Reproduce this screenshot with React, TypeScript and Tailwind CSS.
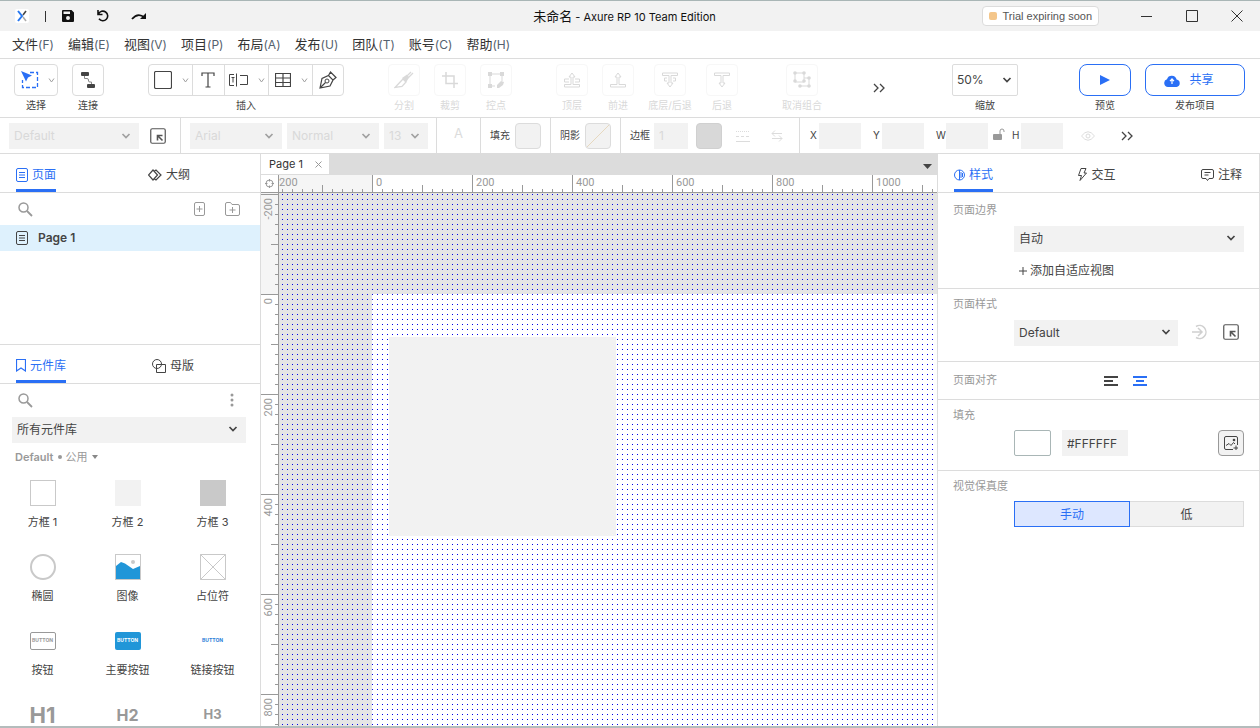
import { useLayoutEffect, useRef, useState } from "react";
import type { ReactNode } from "react";
import clsx from "clsx";

const MENUS = [
  ["文件", "F"], ["编辑", "E"], ["视图", "V"], ["项目", "P"], ["布局", "A"],
  ["发布", "U"], ["团队", "T"], ["账号", "C"], ["帮助", "H"],
];

function Svg({ w = 16, h = 16, children, className }: { w?: number; h?: number; children: ReactNode; className?: string }) {
  return (
    <svg width={w} height={h} viewBox={`0 0 ${w} ${h}`} fill="none" stroke="currentColor" className={clsx("shrink-0", className)}>
      {children}
    </svg>
  );
}

function Chevron({ className }: { className?: string }) {
  return (
    <Svg w={10} h={6} className={className}>
      <path d="M1.5 1L5 4.5L8.5 1" strokeWidth="1.7" />
    </Svg>
  );
}

function SmallChevron() {
  return (
    <Svg w={7} h={5} className="text-[#a0a0a0]">
      <path d="M1 .5L3.5 4L6 .5" />
    </Svg>
  );
}

function DoubleChevron() {
  return (
    <Svg w={12} h={10} className="text-[#444]">
      <path d="M1 1L5 5L1 9M7 1L11 5L7 9" strokeWidth="1.3" />
    </Svg>
  );
}

function Select({ label, value, className, selectClass, chevronClass = "right-2", disabled }: { label: string; value: string; className?: string; selectClass?: string; chevronClass?: string; disabled?: boolean }) {
  return (
    <div className={clsx("relative shrink-0", className)}>
      <select
        aria-label={label}
        disabled={disabled}
        className={clsx("h-full w-full appearance-none px-[5px] text-xs opacity-100 outline-none", disabled ? "bg-[#f2f2f2] text-[#d9d9d9]" : "text-[#444]", selectClass)}
      >
        <option>{value}</option>
      </select>
      <Chevron className={clsx("pointer-events-none absolute top-1/2 -mt-[3px]", chevronClass, disabled ? "text-[#a0a0a0]" : "text-[#444]")} />
    </div>
  );
}

function Divider() {
  return <div className="w-px shrink-0 self-stretch bg-[#dcdcdc]" />;
}

function Tool({ label, children, className }: { label: string; children: ReactNode; className?: string }) {
  return (
    <div className={clsx("flex shrink-0 flex-col items-center gap-[3px] text-[10px] leading-3 whitespace-nowrap text-[#444]", className)}>
      {children}
      <span>{label}</span>
    </div>
  );
}

function DisabledTool({ label, children, className = "w-8" }: { label: string; children: ReactNode; className?: string }) {
  return (
    <Tool label={label} className={clsx("text-[#d9d9d9]!", className)}>
      <button disabled aria-label={label} className="flex size-8 items-center justify-center rounded-sm border border-[#f7f7f7]">
        {children}
      </button>
    </Tool>
  );
}

function CornerArrow() {
  return (
    <Svg w={16} h={16} className="text-[#555]">
      <rect x=".75" y=".75" width="14.5" height="14.5" rx="1.5" strokeWidth="1.2" />
      <path d="M7.5 12.5V7.5H12.5M7.5 7.5L12.5 12.5" strokeWidth="1.6" />
    </Svg>
  );
}

function PageIcon() {
  return (
    <Svg w={12} h={14}>
      <rect x=".5" y=".5" width="11" height="13" rx="1.5" />
      <path d="M3 4.5H9M3 7H9M3 9.5H9" />
    </Svg>
  );
}

function SearchIcon() {
  return (
    <Svg w={15} h={15} className="text-[#999]">
      <circle cx="5.5" cy="5.5" r="4.5" strokeWidth="1.5" />
      <path d="M9 9L14 14" strokeWidth="1.8" />
    </Svg>
  );
}

function TitleBar() {
  return (
    <header className="grid h-[31px] shrink-0 grid-cols-[1fr_auto_1fr] items-center border-t border-[#a9b6b6] bg-[#f2f2f2]">
      <div className="flex items-center pl-[15px]">
        <svg width="14" height="14" viewBox="0 0 14 14" fill="none">
          <rect width="14" height="14" rx="2" fill="#fff" />
          <path d="M3 2L7 7L3 12" stroke="#2878f0" strokeWidth="2" />
          <path d="M11 2L8 6" stroke="#444" strokeWidth="1.6" />
          <path d="M8 8L11 12" stroke="#aaa" strokeWidth="1.6" />
        </svg>
        <div className="ml-4 h-[11px] w-px bg-[#333]" />
        <button aria-label="保存" className="ml-4">
          <svg width="12" height="12" viewBox="0 0 12 12" fill="#111">
            <path fillRule="evenodd" d="M1 0H9.5L12 2.5V11Q12 12 11 12H1Q0 12 0 11V1Q0 0 1 0ZM1.5 1.5V4H8V1.5ZM6 6A2 2 0 1 0 6 10A2 2 0 1 0 6 6Z" />
          </svg>
        </button>
        <button aria-label="撤销" className="ml-[23px]">
          <Svg w={12} h={12} className="text-[#111]">
            <path d="M1 0V4.5H5.5M1.5 4A4.8 4.8 0 1 1 2 8.8" strokeWidth="1.6" />
          </Svg>
        </button>
        <button aria-label="重做" className="ml-[22px]">
          <Svg w={16} h={12} className="text-[#111]">
            <path d="M1 9Q7 2 13.5 7.5" strokeWidth="1.8" />
            <path d="M15 3V9H9Z" fill="currentColor" stroke="none" />
          </Svg>
        </button>
      </div>
      <h1 className="pr-[11px] text-[11px] leading-4 text-[#111]"><span className="text-[13px]">未命名</span> - Axure RP 10 Team Edition</h1>
      <div className="flex items-center justify-end pr-[17px] text-[#333]">
        <button className="flex h-5 items-center gap-[6px] rounded-sm border border-[#dcdcdc] bg-white px-[6px] font-['Liberation_Sans',sans-serif] text-[11px] text-[#555]">
          <span className="size-2 rounded-xs bg-[#f4c68a]" />
          Trial expiring soon
        </button>
        <button aria-label="最小化" className="ml-[42px]"><Svg w={12} h={12}><path d="M0 6.5H11" /></Svg></button>
        <button aria-label="最大化" className="ml-[33px]"><Svg w={12} h={12}><path d="M.5 .5H11.5V11.5H.5Z" /></Svg></button>
        <button aria-label="关闭" className="ml-[33px]"><Svg w={12} h={12}><path d="M.5 .5L11.5 11.5M11.5 .5L.5 11.5" /></Svg></button>
      </div>
    </header>
  );
}

function ToolBar() {
  const cell = "flex h-full items-center justify-center border-r border-[#dcdcdc] last:border-r-0";
  return (
    <div className="flex h-[59px] shrink-0 items-start border-b border-[#dcdcdc] px-[14px] pt-[5px]">
      <Tool label="选择" className="w-11">
        <button aria-label="选择" className="flex h-8 w-11 items-center justify-center gap-[9px] rounded-sm border border-[#dcdcdc] pl-1">
          <Svg w={18} h={18} className="text-[#2a6ff5]">
            <path d="M9 1.5H16.5V16.5H1.5V9" strokeDasharray="4 2" strokeWidth="1.3" />
            <path d="M0 0L11 4.5L7 6.5L5 10.5Z" fill="currentColor" stroke="none" />
          </Svg>
          <SmallChevron />
        </button>
      </Tool>
      <Tool label="连接" className="ml-[14px] w-8">
        <button aria-label="连接" className="flex size-8 items-center justify-center rounded-sm border border-[#dcdcdc] text-[#444]">
          <Svg w={16} h={18}>
            <path d="M4.5 4V7.5H7Q8.5 7.5 8.5 9V10Q8.5 11 10 11H11.5V14" stroke="#888" />
            <rect x="1" y="1" width="8" height="4" rx="1" fill="currentColor" stroke="none" />
            <rect x="7" y="13" width="8" height="4" rx="1" fill="currentColor" stroke="none" />
          </Svg>
        </button>
      </Tool>
      <Tool label="插入" className="ml-11">
        <div className="flex h-8 rounded-sm border border-[#dcdcdc] text-[#444]">
          <button aria-label="矩形" className={clsx(cell, "w-11 gap-[10px] pl-[2px]")}>
            <Svg w={18} h={18}><rect x=".5" y=".5" width="17" height="17" rx="1.5" strokeWidth="1.2" /></Svg>
            <SmallChevron />
          </button>
          <button aria-label="文本" className={clsx(cell, "w-8 pr-[2px]")}>
            <Svg w={14} h={16}><path d="M1 4V1H13V4M7 1V15M4.5 15H9.5" strokeWidth="1.2" /></Svg>
          </button>
          <button aria-label="表单" className={clsx(cell, "w-11 gap-[9px]")}>
            <Svg w={20} h={14}>
              <path d="M5 1.5H.5V12.5H5M7.5 .5V13.5M11 2.5H18.5V11.5H11M2.5 4.5H5.5M4 4.5V9.5" />
            </Svg>
            <SmallChevron />
          </button>
          <button aria-label="表格" className={clsx(cell, "w-11 gap-[10px] pl-[2px]")}>
            <Svg w={16} h={14}><path d="M.5 .5H15.5V13.5H.5ZM.5 5H15.5M.5 9.5H15.5M8 .5V13.5" strokeWidth="1.2" /></Svg>
            <SmallChevron />
          </button>
          <button aria-label="钢笔" className={clsx(cell, "w-[30px]")}>
            <Svg w={18} h={18}>
              <path d="M1 17L3 7.5L9.5 4.5L14 9L11 15L1 17ZM9.5 4.5L11.5 1L17 6.5L14 9M1 17L6.5 11.5" strokeWidth="1.2" />
              <circle cx="8" cy="10" r="2" />
            </Svg>
          </button>
        </div>
      </Tool>
      <div className="ml-11 flex gap-[14px]">
        <DisabledTool label="分割">
          <Svg w={20} h={18}>
            <path d="M1 16.5L9 8L12 11L8 15.5Z M12 9L19 2M11 7L17 1" strokeWidth="1.3" />
            <path d="M8 7L13 3.5L15 6L12.5 11Z" fill="currentColor" stroke="none" />
          </Svg>
        </DisabledTool>
        <DisabledTool label="裁剪">
          <Svg w={16} h={16}><path d="M4 0V11.5H16M0 4H12V16" strokeWidth="1.5" /></Svg>
        </DisabledTool>
        <DisabledTool label="控点">
          <Svg w={18} h={18}>
            <path d="M3 3H15M3 3V15M15 3V10M3 15H8" />
            <path d="M1 1H5V5H1ZM13 1H17V5H13ZM1 13H5V17H1ZM10 14L14 10L17 11L16 14L12 17H10Z" fill="currentColor" stroke="none" />
          </Svg>
        </DisabledTool>
      </div>
      <div className="ml-11 flex gap-[14px]">
        <DisabledTool label="顶层">
          <Svg w={18} h={18}><path d="M8 13.5V6H6L9 2L12 6H10V13.5H16.5V16H1.5V13.5ZM6 8H1.5V11H6M12 8H16.5V11H12" /></Svg>
        </DisabledTool>
        <DisabledTool label="前进">
          <Svg w={18} h={18}><path d="M8 13.5V6H6L9 2L12 6H10V13.5H16.5V16H1.5V13.5Z" /></Svg>
        </DisabledTool>
        <DisabledTool label="底层/后退" className="w-11">
          <Svg w={18} h={18}><path d="M8 4.5V12H6L9 16L12 12H10V4.5H16.5V2H1.5V4.5ZM6 10H3.5V7H6M12 10H14.5V7H12" /></Svg>
        </DisabledTool>
        <DisabledTool label="后退">
          <Svg w={18} h={18}><path d="M8 4.5V12H6L9 16L12 12H10V4.5H16.5V2H1.5V4.5Z" /></Svg>
        </DisabledTool>
      </div>
      <DisabledTool label="取消组合" className="ml-11 w-10">
        <Svg w={18} h={18}>
          <path d="M2 2H11V11H2ZM7 15H16V7H11" />
          <g fill="currentColor" stroke="none">
            <circle cx="2" cy="2" r="1.8" /><circle cx="11" cy="2" r="1.8" /><circle cx="2" cy="10" r="1.8" /><circle cx="11" cy="10" r="1.8" />
            <circle cx="16" cy="7" r="1.8" /><circle cx="7" cy="15" r="1.8" /><circle cx="16" cy="15" r="1.8" />
          </g>
        </Svg>
      </DisabledTool>
      <button aria-label="更多工具" className="mt-[19px] ml-[51px]"><DoubleChevron /></button>
      <Tool label="缩放" className="mr-[61px] ml-auto">
        <Select label="缩放" value="50%" className="h-8 w-[66px]" selectClass="rounded-xs border border-[#dcdcdc] text-[#444] pl-1!" chevronClass="right-[6px]" />
      </Tool>
      <Tool label="预览" className="mr-[14px]">
        <button aria-label="预览" className="flex h-8 w-[52px] items-center justify-center rounded-lg border border-[#2a6ff5]">
          <svg width="10" height="10" viewBox="0 0 10 10" fill="#2a6ff5"><path d="M0 0L10 5L0 10Z" /></svg>
        </button>
      </Tool>
      <Tool label="发布项目" className="mr-px">
        <button className="flex h-8 w-[100px] items-center justify-center gap-[9px] rounded-lg border border-[#2a6ff5] pr-3 text-xs text-[#2a6ff5]">
          <svg width="16" height="13" viewBox="0 0 16 13">
            <path d="M4 13A4 4 0 0 1 3 5.2A5 5 0 0 1 12.6 5.5A3.8 3.8 0 0 1 12.5 13Z" fill="#2a6ff5" />
            <path d="M8 10V5.5M6 7.2L8 5L10 7.2" fill="none" stroke="#fff" strokeWidth="1.2" />
          </svg>
          共享
        </button>
      </Tool>
    </div>
  );
}

function Coord({ name, className }: { name: string; className?: string }) {
  return (
    <label className={clsx("flex w-[51px] shrink-0 items-center justify-between text-[10px] text-[#444]", className)}>
      {name}
      <input disabled className="h-[26px] w-[42px] bg-[#f2f2f2]" />
    </label>
  );
}

function FormatBar() {
  const swatch = "size-[26px] shrink-0 rounded-sm border border-[#dcdcdc] bg-[#f2f2f2]";
  return (
    <div className="flex h-9 shrink-0 items-center border-b border-[#dcdcdc] pl-[9px] text-[10px] text-[#444]">
      <Select disabled label="部件样式" value="Default" className="h-[26px] w-[130px]" />
      <button aria-label="样式管理" className="mr-[14px] ml-[11px]"><CornerArrow /></button>
      <Divider />
      <div className="mr-2 ml-[9px] flex gap-[5px]">
        <Select disabled label="字体" value="Arial" className="h-[26px] w-[92px]" />
        <Select disabled label="字重" value="Normal" className="h-[26px] w-[92px]" />
        <Select disabled label="字号" value="13" className="h-[26px] w-11" />
      </div>
      <Divider />
      <button disabled aria-label="文字颜色" className="w-[43px] shrink-0 pb-1 text-center text-[13px] text-[#dcdcdc]">A</button>
      <Divider />
      <div className="flex shrink-0 items-center gap-[5px] px-[9px]">填充<button disabled aria-label="填充" className={swatch} /></div>
      <Divider />
      <div className="flex shrink-0 items-center gap-[5px] px-[9px]">
        阴影
        <button disabled aria-label="阴影" className={swatch}>
          <Svg w={24} h={24} className="text-[#e6d8bf]"><path d="M1 23L23 1" /></Svg>
        </button>
      </div>
      <Divider />
      <label className="flex shrink-0 items-center gap-1 pl-[9px]">
        边框
        <input disabled defaultValue="1" className="h-[26px] w-[34px] bg-[#f2f2f2] px-[5px] text-xs text-[#d9d9d9]" />
      </label>
      <button disabled aria-label="边框颜色" className="ml-2 size-[26px] shrink-0 rounded-sm border border-[#d0d0d0] bg-[#d8d8d8]" />
      <button disabled aria-label="线型" className="ml-[14px] text-[#dcdcdc]">
        <Svg w={14} h={12}><path d="M0 1.5H14" strokeDasharray="1 1" /><path d="M0 6.5H14" strokeDasharray="3 2" /><path d="M0 11.5H14" /></Svg>
      </button>
      <button disabled aria-label="箭头" className="mr-[15px] ml-5 text-[#dcdcdc]">
        <Svg w={14} h={12}><path d="M12 3.5H2M5 .5L2 3.5L5 6.5M2 8.5H12M9 5.5L12 8.5L9 11.5" /></Svg>
      </button>
      <Divider />
      <Coord name="X" className="ml-[10px]" />
      <Coord name="Y" className="ml-3" />
      <Coord name="W" className="ml-3" />
      <button aria-label="锁定比例" className="ml-[6px] pb-1">
        <Svg w={12} h={14} className="text-[#999]">
          <rect x="0" y="7" width="9" height="6" rx="1" fill="currentColor" stroke="none" />
          <path d="M7 7V4A2 2 0 0 1 11 4V5" />
        </Svg>
      </button>
      <Coord name="H" className="ml-[7px]" />
      <button disabled aria-label="可见性" className="ml-[18px] text-[#dcdcdc]">
        <Svg w={14} h={10}><path d="M.5 5Q7 -3.5 13.5 5Q7 13.5 .5 5Z" /><circle cx="7" cy="5" r="2" /></Svg>
      </button>
      <button aria-label="更多属性" className="ml-[26px]"><DoubleChevron /></button>
    </div>
  );
}

function Tab({ label, icon, active }: { label: string; icon: ReactNode; active?: boolean }) {
  return (
    <button className={clsx("flex h-full items-center gap-1 border-b-3 pt-[6px] text-xs", active ? "border-[#2a6ff5] text-[#2a6ff5]" : "border-transparent text-[#444]")}>
      {icon}
      {label}
    </button>
  );
}

const WIDGETS: { label: string; art: ReactNode }[] = [
  { label: "方框 1", art: <div className="size-[26px] border border-[#c9c9c9]" /> },
  { label: "方框 2", art: <div className="size-[26px] bg-[#f2f2f2]" /> },
  { label: "方框 3", art: <div className="size-[26px] bg-[#c9c9c9]" /> },
  { label: "椭圆", art: <div className="size-[26px] rounded-full border-2 border-[#c9c9c9]" /> },
  {
    label: "图像",
    art: (
      <Svg w={26} h={26}>
        <rect x=".5" y=".5" width="25" height="25" stroke="#c9c9c9" />
        <path d="M1 12L6 8L10 9.5L18 15L25 12V25H1Z" fill="#2196d8" stroke="none" />
        <circle cx="18" cy="8" r="2" fill="#c9c9c9" stroke="none" />
      </Svg>
    ),
  },
  { label: "占位符", art: <Svg w={26} h={26} className="text-[#c9c9c9]"><path d="M.5 .5H25.5V25.5H.5ZM.5 .5L25.5 25.5M25.5 .5L.5 25.5" /></Svg> },
  { label: "按钮", art: <div className="flex h-[18px] w-[26px] items-center justify-center rounded-xs border border-[#999] text-[5px] font-bold text-[#999]">BUTTON</div> },
  { label: "主要按钮", art: <div className="flex h-[18px] w-[26px] items-center justify-center rounded-xs bg-[#2196d8] text-[5px] font-bold text-white">BUTTON</div> },
  { label: "链接按钮", art: <div className="text-[5px] font-bold text-[#2a80d8]">BUTTON</div> },
  { label: "", art: <div className="text-[22px] font-bold text-[#999]">H1</div> },
  { label: "", art: <div className="text-base font-bold text-[#999]">H2</div> },
  { label: "", art: <div className="text-[13px] font-bold text-[#999]">H3</div> },
];

function LeftPanel() {
  return (
    <aside className="flex w-[261px] shrink-0 flex-col overflow-hidden border-r border-[#dcdcdc]">
      <div className="flex h-[39px] shrink-0 justify-between border-b border-[#dcdcdc] pr-[70px] pl-4">
        <Tab active label="页面" icon={<PageIcon />} />
        <Tab label="大纲" icon={<Svg w={14} h={12}><path d="M5 1L9.5 6L5 11L.5 6ZM6.5 2L8 1L13 6L8 11L6.5 10" strokeWidth="1.2" /></Svg>} />
      </div>
      <div className="flex h-8 shrink-0 items-center pr-5 pl-[18px] text-[#999]">
        <button aria-label="搜索页面"><SearchIcon /></button>
        <button aria-label="添加页面" className="ml-auto">
          <Svg w={11} h={14}><rect x=".5" y=".5" width="10" height="13" rx="1.5" /><path d="M5.5 4V10M2.5 7H8.5" /></Svg>
        </button>
        <button aria-label="添加文件夹" className="ml-5">
          <Svg w={15} h={14}><path d="M.5 12V2Q.5 .5 2 .5H5.5L7 2.5H13Q14.5 2.5 14.5 4V12Q14.5 13.5 13 13.5H2Q.5 13.5 .5 12ZM7.5 5V11M4.5 8H10.5" /></Svg>
        </button>
      </div>
      <button className="flex h-[26px] shrink-0 items-center gap-[10px] bg-[#def1fd] pl-4 text-xs font-semibold text-[#444]">
        <PageIcon />
        Page 1
      </button>
      <div className="h-[93px] shrink-0" />
      <div className="flex h-10 shrink-0 justify-between border-y border-[#dcdcdc] pr-[66px] pl-4">
        <Tab active label="元件库" icon={<Svg w={10} h={13}><path d="M.5 .5H9.5V12L5 9L.5 12Z" strokeWidth="1.2" /></Svg>} />
        <Tab label="母版" icon={<Svg w={14} h={14}><circle cx="5" cy="5" r="4.5" /><path d="M4.5 5.5H13.5V13.5H4.5Z" /></Svg>} />
      </div>
      <div className="flex h-8 shrink-0 items-center justify-between pr-[26px] pl-[18px] text-[#999]">
        <button aria-label="搜索元件"><SearchIcon /></button>
        <button aria-label="元件库选项">
          <svg width="4" height="14" viewBox="0 0 4 14" fill="#999"><circle cx="2" cy="2" r="1.5" /><circle cx="2" cy="7" r="1.5" /><circle cx="2" cy="12" r="1.5" /></svg>
        </button>
      </div>
      <Select label="元件库" value="所有元件库" className="mr-[14px] ml-3 h-[26px]" selectClass="bg-[#f2f2f2]" />
      <button className="flex h-[30px] shrink-0 items-center gap-1 pl-[15px] text-[11px] text-[#999]">
        <b className="font-semibold">Default</b><span className="size-1 rounded-full bg-[#999]" />公用
        <svg width="6" height="4" viewBox="0 0 6 4" fill="#888"><path d="M0 0H6L3 4Z" /></svg>
      </button>
      <ul className="grid min-h-0 grow auto-rows-[74px] grid-cols-3 overflow-hidden pt-2 pr-[5px] text-[11px] text-[#444]">
        {WIDGETS.map((w, i) => (
          <li key={i} className="flex flex-col items-center gap-2">
            <div className="flex h-[26px] items-center justify-center">{w.art}</div>
            <span className="leading-4">{w.label}</span>
          </li>
        ))}
      </ul>
    </aside>
  );
}

// canvas is at 50%: 1 screen px = 2 page units
const ORIGIN_X = 93;
const ORIGIN_Y = 101;

function Ruler({ vertical }: { vertical?: boolean }) {
  const ref = useRef<SVGSVGElement>(null);
  const [size, setSize] = useState(0);

  useLayoutEffect(() => {
    const measure = () => {
      const box = ref.current!.getBoundingClientRect();
      setSize(vertical ? box.height : box.width);
    };
    measure();
    window.addEventListener("resize", measure);
    return () => window.removeEventListener("resize", measure);
  }, [vertical]);

  const origin = vertical ? ORIGIN_Y : ORIGIN_X;
  const ticks: number[] = [];
  for (let n = -10; origin + n * 10 < size; n++) ticks.push(n);

  return (
    <svg
      ref={ref}
      aria-hidden="true"
      className={clsx("block bg-white font-[Roboto,sans-serif] text-[11px]", vertical ? "h-full w-[18px]" : "h-[18px] w-full")}
      shapeRendering="crispEdges"
    >
      <rect width={vertical ? 18 : origin} height={vertical ? origin : 18} fill="#f5f5f5" />
      {ticks.map((n) => {
        const p = origin + n * 10;
        const len = n % 10 === 0 ? 18 : n % 5 === 0 ? 7 : 3;
        return vertical ? (
          <rect key={n} x={17 - len} y={p} width={len} height="1" fill="#999" />
        ) : (
          <rect key={n} x={p} y={17 - len} width="1" height={len} fill="#999" />
        );
      })}
      {ticks.filter((n) => n % 10 === 0 && origin + n * 10 < size - 20).map((n) => {
        const p = origin + n * 10;
        return (
          <text key={n} fill="#999" transform={vertical ? `translate(11 ${p + 4}) rotate(-90)` : `translate(${p + 4} 11)`} textAnchor={vertical ? "end" : "start"}>
            {n * 20}
          </text>
        );
      })}
      <rect x={vertical ? 17 : 0} y={vertical ? 0 : 17} width={vertical ? 1 : "100%"} height={vertical ? "100%" : 1} fill="#999" />
    </svg>
  );
}

function Canvas() {
  return (
    <main className="flex min-w-0 grow flex-col overflow-hidden">
      <div className="flex h-[21px] shrink-0 items-center justify-between bg-[#dcdcdc] pr-[5px]">
        <div className="flex h-5 items-center gap-3 self-start bg-white pr-[7px] pl-2 text-[11px] text-[#333]">
          Page 1
          <button aria-label="关闭页面" className="text-[#999]"><Svg w={7} h={7}><path d="M.5 .5L6.5 6.5M6.5 .5L.5 6.5" /></Svg></button>
        </div>
        <button aria-label="页面列表" className="pt-1"><svg width="9" height="5" viewBox="0 0 9 5" fill="#444"><path d="M0 0H9L4.5 5Z" /></svg></button>
      </div>
      <div className="grid min-h-0 grow grid-cols-[18px_minmax(0,1fr)] grid-rows-[18px_minmax(0,1fr)]">
        <div className="flex items-center justify-center border-r border-b border-[#999] bg-white text-[#999]">
          <Svg w={9} h={9}><circle cx="4.5" cy="4.5" r="3.5" /><path d="M4.5 0V2.5M4.5 6.5V9M0 4.5H2.5M6.5 4.5H9" /></Svg>
        </div>
        <Ruler />
        <Ruler vertical />
        <svg className="block h-full w-full bg-[#e5e5e5]" shapeRendering="crispEdges">
          <defs>
            <pattern id="dots" x={ORIGIN_X} y={ORIGIN_Y} width="5" height="5" patternUnits="userSpaceOnUse">
              <rect width="1" height="1" fill="#0000e6" />
            </pattern>
          </defs>
          <rect x={ORIGIN_X} y={ORIGIN_Y} width="100%" height="100%" fill="#fff" />
          <rect width="100%" height="100%" fill="url(#dots)" />
          <rect x={ORIGIN_X + 17} y={ORIGIN_Y + 43} width="227" height="199" fill="#f2f2f2" />
        </svg>
      </div>
    </main>
  );
}

function Section({ title, children, className }: { title: string; children: ReactNode; className?: string }) {
  return (
    <section className={clsx("border-b border-[#dcdcdc] pr-[15px] pl-[15px] last:border-b-0", className)}>
      <h2 className="text-[11px] leading-4 text-[#999]">{title}</h2>
      {children}
    </section>
  );
}

function RightPanel() {
  return (
    <aside className="w-[323px] shrink-0 overflow-hidden border-x border-[#dcdcdc]">
      <div className="flex h-[39px] justify-between border-b border-[#dcdcdc] pr-[17px] pl-4">
        <Tab active label="样式" icon={<Svg w={11} h={12}><circle cx="5.5" cy="6" r="5" /><path d="M5.5 1V11M7 3V9M8.5 4V8" /></Svg>} />
        <Tab label="交互" icon={<Svg w={9} h={13}><path d="M3 .5H8L6 5H8.5L2 12.5L3.5 7.5H.5Z" /></Svg>} />
        <Tab label="注释" icon={<Svg w={13} h={12}><path d="M2 .5H11Q12.5 .5 12.5 2V8Q12.5 9.5 11 9.5H8L6.5 11.5L5 9.5H2Q.5 9.5 .5 8V2Q.5 .5 2 .5ZM3.5 3.5H9.5M3.5 6H7.5" /></Svg>} />
      </div>
      <Section title="页面边界" className="h-24 pt-[9px]">
        <div className="ml-[61px]">
          <Select label="页面边界" value="自动" className="mt-[7px] h-[26px]" selectClass="bg-[#f2f2f2]" />
          <button className="mt-3 ml-[5px] flex items-center gap-[3px] text-xs text-[#444]">
            <Svg w={8} h={8}><path d="M4 0V8M0 4H8" /></Svg>
            添加自适应视图
          </button>
        </div>
      </Section>
      <Section title="页面样式" className="h-[73px] pt-[7px]">
        <div className="mt-[7px] ml-[61px] flex items-center">
          <Select label="页面样式" value="Default" className="h-[26px] w-[164px]" selectClass="bg-[#f2f2f2]" chevronClass="right-[7px]" />
          <button disabled aria-label="更新样式" className="ml-[14px] text-[#d0d0d0]">
            <Svg w={15} h={16}><path d="M4 2.5A6.5 6.5 0 1 1 4 13.5M0 8H9.5M6 4L10 8L6 12" strokeWidth="1.5" /></Svg>
          </button>
          <button aria-label="管理页面样式" className="mr-[5px] ml-auto"><CornerArrow /></button>
        </div>
      </Section>
      <section className="flex h-[38px] items-center border-b border-[#dcdcdc] pl-[15px]">
        <h2 className="w-[151px] text-[11px] text-[#999]">页面对齐</h2>
        <button aria-label="左对齐" className="text-[#444]"><Svg w={14} h={10}><path d="M0 1H14M0 5H9M0 9H14" strokeWidth="2" /></Svg></button>
        <button aria-label="居中对齐" className="ml-[15px] text-[#2a6ff5]"><Svg w={14} h={10}><path d="M0 1H14M3 5H11M0 9H14" strokeWidth="2" /></Svg></button>
      </section>
      <Section title="填充" className="h-[71px] pt-[7px]">
        <div className="mt-[7px] ml-[61px] flex">
          <button aria-label="填充颜色" className="h-[26px] w-[37px] rounded-xs border border-[#a9b6b6] bg-white" />
          <input aria-label="颜色值" defaultValue="#FFFFFF" className="ml-[11px] h-[26px] w-[66px] bg-[#f2f2f2] px-[5px] text-xs text-[#444]" />
          <button aria-label="填充图片" className="ml-auto flex size-[26px] items-center justify-center rounded-sm border border-[#999] bg-[#f2f2f2] text-[#444]">
            <Svg w={14} h={14}>
              <path d="M9 13.5H2Q.5 13.5 .5 12V2Q.5 .5 2 .5H12Q13.5 .5 13.5 2V9M2 9.5L5 7.5L7 9.5L9.5 6.5L11 8M12 9.5V14M9.5 12H14" />
              <circle cx="10" cy="4" r="1.3" fill="currentColor" stroke="none" />
            </Svg>
          </button>
        </div>
      </Section>
      <Section title="视觉保真度" className="pt-[7px]">
        <div className="mt-[7px] ml-[61px] flex h-[26px] text-xs">
          <button className="w-[116px] border border-[#2a6ff5] bg-[#dde7ff] pt-px text-[#2a6ff5]">手动</button>
          <button className="grow border border-l-0 border-[#dcdcdc] bg-[#f2f2f2] pt-px text-[#444]">低</button>
        </div>
      </Section>
    </aside>
  );
}

export default function App() {
  return (
    <div className="flex h-screen flex-col overflow-hidden border-b-2 border-[#b4bcbc] bg-white font-[Inter,'Noto_Sans_CJK_SC',sans-serif]">
      <TitleBar />
      <nav className="flex h-7 shrink-0 items-center gap-[14px] border-b border-[#dcdcdc] pl-3 text-[13px] leading-4 text-[#333]">
        {MENUS.map(([name, key]) => (
          <button key={key} className="whitespace-nowrap">
            {name}<span className="text-xs text-[#55616e]">({key})</span>
          </button>
        ))}
      </nav>
      <ToolBar />
      <FormatBar />
      <div className="flex min-h-0 grow">
        <LeftPanel />
        <Canvas />
        <RightPanel />
      </div>
    </div>
  );
}
